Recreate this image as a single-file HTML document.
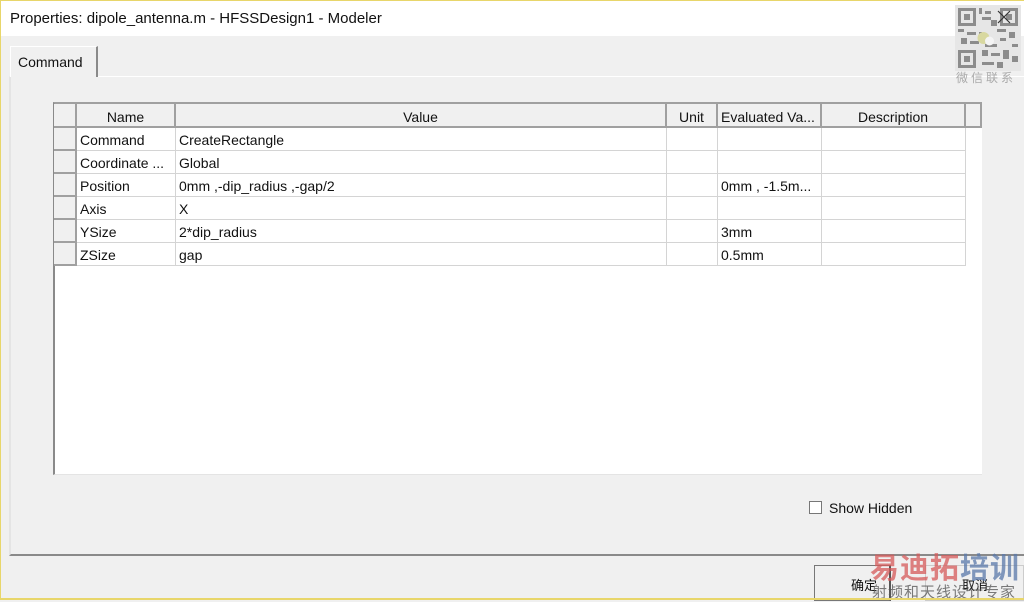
<!DOCTYPE html><html><head><meta charset="utf-8"><style>
*{margin:0;padding:0;box-sizing:border-box}
body{width:1024px;height:600px;overflow:hidden;background:#f0f0f0;font-family:"Liberation Sans","Noto Sans CJK SC",sans-serif;font-size:14px;color:#111;position:relative}
.a{position:absolute}
#frame{left:0;top:0;width:1024px;height:600px;border:1px solid #e8d66a;border-right:none;border-bottom:2px solid #e8d66a}
#title{left:1px;top:1px;width:1023px;height:35px;background:#fff}
.t{white-space:nowrap}
.cell{position:absolute;height:23px;line-height:25px;padding-left:3px;border-right:1px solid #d4d4d4;border-bottom:1px solid #d4d4d4;background:#fff;white-space:nowrap;overflow:hidden}
.hd{position:absolute;top:104px;height:24px;line-height:26px;text-align:center;background:#f0f0f0;border-right:2px solid #a0a0a0;border-bottom:2px solid #a0a0a0}
.rh{position:absolute;left:54px;width:23px;height:23px;background:#f0f0f0;border-right:2px solid #a0a0a0;border-bottom:2px solid #a0a0a0}
</style></head><body>
<div class="a" id="title"></div>
<div class="a t" style="left:10px;top:10px;font-size:15px">Properties: dipole_antenna.m - HFSSDesign1 - Modeler</div>
<div class="a" style="left:9px;top:76px;width:1015px;height:480px;border-left:2px solid #e4e4e4;border-top:1px solid #fff;border-bottom:2px solid #8a8a8a"></div>
<div class="a" style="left:10px;top:46px;width:88px;height:31px;background:#f0f0f0;border-left:1px solid #fff;border-top:1px solid #fff;border-right:2px solid #8a8a8a"></div>
<div class="a t" style="left:18px;top:54px">Command</div>
<div class="a" style="left:53px;top:102px;width:929px;height:373px;background:#fff;border-left:2px solid #8a8a8a;border-top:2px solid #a0a0a0;border-bottom:1px solid #e4e4e4"></div>
<div class="hd" style="left:54px;width:23px"></div>
<div class="hd" style="left:77px;width:99px">Name</div>
<div class="hd" style="left:176px;width:491px">Value</div>
<div class="hd" style="left:667px;width:51px">Unit</div>
<div class="hd" style="left:718px;width:104px;text-align:left;padding-left:3px">Evaluated Va...</div>
<div class="hd" style="left:822px;width:144px">Description</div>
<div class="hd" style="left:966px;width:16px"></div>
<div id="rows"></div>
<script>
var d=[["Command","CreateRectangle",""],["Coordinate ...","Global",""],["Position","0mm ,-dip_radius ,-gap/2","0mm , -1.5m..."],["Axis","X",""],["YSize","2*dip_radius","3mm"],["ZSize","gap","0.5mm"]];
var h="";d.forEach(function(r,i){var y=128+i*23;
h+='<div class="rh" style="top:'+y+'px"></div>';
h+='<div class="cell" style="left:77px;top:'+y+'px;width:99px">'+r[0]+'</div>';
h+='<div class="cell" style="left:176px;top:'+y+'px;width:491px">'+r[1]+'</div>';
h+='<div class="cell" style="left:667px;top:'+y+'px;width:51px"></div>';
h+='<div class="cell" style="left:718px;top:'+y+'px;width:104px">'+r[2]+'</div>';
h+='<div class="cell" style="left:822px;top:'+y+'px;width:144px"></div>';});
document.getElementById("rows").innerHTML=h;
</script>
<div class="a" style="left:809px;top:501px;width:13px;height:13px;background:#fff;border:1px solid #777"></div>
<div class="a t" style="left:829px;top:500px">Show Hidden</div>
<div class="a" style="left:814px;top:565px;width:77px;height:36px;border:1px solid #777;border-right:2px solid #555;background:#f0f0f0"></div>
<div class="a t" style="left:851px;top:575px;font-size:13px">确定</div>
<div class="a" style="left:925px;top:565px;width:99px;height:36px;border:1px solid #ccc;background:#f0f0f0"></div>
<div class="a t" style="left:962px;top:575px;font-size:13px">取消</div>
<div class="a t" style="left:870px;top:545px;font-size:29px;font-weight:bold;color:rgba(214,90,90,.75);letter-spacing:1px">易迪拓<span style="color:rgba(90,120,170,.75)">培训</span></div>
<div class="a t" style="left:872px;top:581px;font-size:15px;color:rgba(90,90,90,.8);letter-spacing:1px">射频和天线设计专家</div>
<svg class="a" style="left:955px;top:5px" width="66" height="66" viewBox="0 0 22 22">
<rect width="22" height="22" fill="#e6e6e6"/>
<g fill="#8c8c8c">
<rect x="1" y="1" width="6" height="6"/><rect x="15" y="1" width="6" height="6"/><rect x="1" y="15" width="6" height="6"/>
<rect x="8" y="1" width="1" height="2"/><rect x="10" y="2" width="2" height="1"/><rect x="9" y="4" width="3" height="1"/><rect x="12" y="5" width="2" height="2"/>
<rect x="1" y="8" width="2" height="1"/><rect x="4" y="9" width="3" height="1"/><rect x="2" y="11" width="2" height="2"/><rect x="5" y="12" width="3" height="1"/>
<rect x="14" y="8" width="3" height="1"/><rect x="18" y="9" width="2" height="2"/><rect x="15" y="11" width="2" height="1"/><rect x="19" y="13" width="2" height="1"/>
<rect x="9" y="15" width="2" height="2"/><rect x="12" y="16" width="3" height="1"/><rect x="16" y="15" width="2" height="3"/><rect x="19" y="17" width="2" height="2"/>
<rect x="9" y="19" width="4" height="1"/><rect x="14" y="19" width="2" height="2"/><rect x="8" y="9" width="1" height="3"/><rect x="10" y="13" width="4" height="1"/>
</g>
<g fill="#e6e6e6"><rect x="2" y="2" width="4" height="4"/><rect x="16" y="2" width="4" height="4"/><rect x="2" y="16" width="4" height="4"/></g>
<g fill="#8c8c8c"><rect x="3" y="3" width="2" height="2"/><rect x="17" y="3" width="2" height="2"/><rect x="3" y="17" width="2" height="2"/></g>
<circle cx="9.5" cy="11" r="2" fill="#d8d8a0"/><circle cx="11.5" cy="12" r="1.5" fill="#f4f4f4"/>
</svg>
<div class="a t" style="left:956px;top:69px;font-size:12px;color:#aaa;letter-spacing:3px">微信联系</div>
<svg class="a" style="left:997px;top:10px" width="14" height="14"><path d="M1 1L13 13M13 1L1 13" stroke="#333" stroke-width="1.2"/></svg>
<div class="a" id="frame"></div>
</body></html>
